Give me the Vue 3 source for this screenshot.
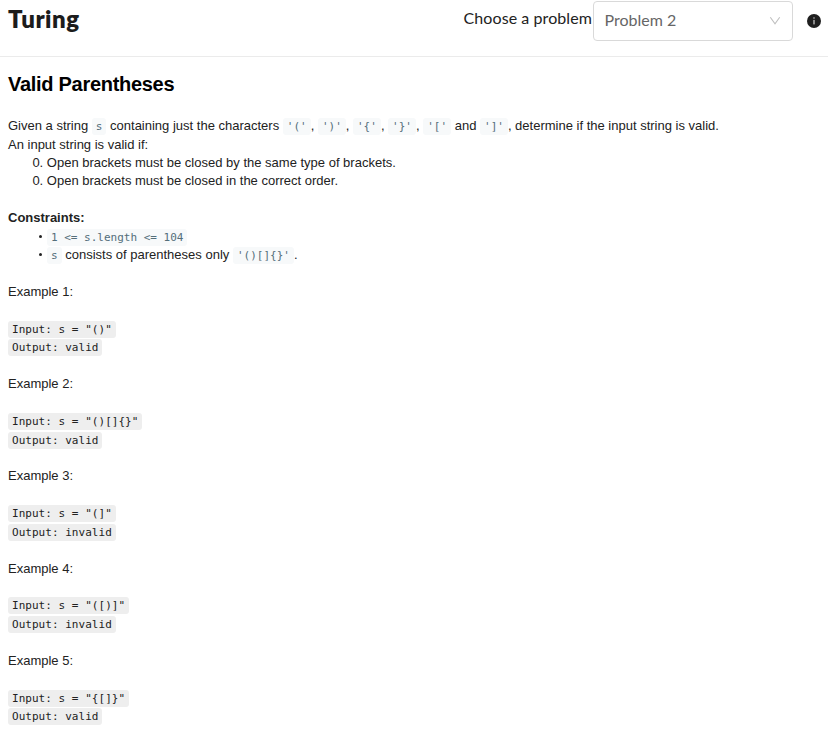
<script setup>
const examples = [
  { input: '"()"', output: 'valid' },
  { input: '"()[]{}"', output: 'valid' },
  { input: '"(]"', output: 'invalid' },
  { input: '"([)]"', output: 'invalid' },
  { input: '"{[]}"', output: 'valid' },
]
</script>

<template>
  <div class="page">
    <header class="bar">
      <div class="brand">Turing</div>
      <div class="picker">
        <label class="label">Choose a problem</label>
        <div class="select">
          <span class="value">Problem 2</span>
          <svg class="chevron" width="12" height="12" viewBox="0 0 12 12" fill="none" stroke="#bfbfbf" stroke-width="1.1">
            <path d="M1.3 2.2 L6 8.9 L10.7 2.2" />
          </svg>
        </div>
        <svg class="info" width="14" height="14" viewBox="0 0 14 14">
          <circle cx="7" cy="7" r="7" fill="#1f1f1f" />
          <rect x="6.4" y="5.9" width="1.2" height="4.5" fill="#d0d0d0" />
          <circle cx="7" cy="4.1" r=".75" fill="#d0d0d0" />
        </svg>
      </div>
    </header>
    <main class="body">
      <h1 class="title">Valid Parentheses</h1>
      <p class="intro">Given a string <code>s</code> containing just the characters <code>'('</code>, <code>')'</code>, <code>'{'</code>, <code>'}'</code>, <code>'['</code> and <code>']'</code>, determine if the input string is valid.</p>
      <p>An input string is valid if:</p>
      <p class="rule">0. Open brackets must be closed by the same type of brackets.</p>
      <p class="rule">0. Open brackets must be closed in the correct order.</p>
      <p class="strong">Constraints:</p>
      <ul class="list">
        <li><code>1 &lt;= s.length &lt;= 104</code></li>
        <li><code>s</code> consists of parentheses only <code>'()[]{}'</code>.</li>
      </ul>
      <section v-for="(e, i) in examples" :key="i" class="example">
        <p class="name">Example {{ i + 1 }}:</p>
        <p><code class="io">Input: s = {{ e.input }}</code></p>
        <p><code class="io">Output: {{ e.output }}</code></p>
      </section>
    </main>
  </div>
</template>

<style>
body { background: #fff; }
</style>

<style scoped>
.page {
  --row: 18.45px;
  width: 828px;
  height: 735px;
  overflow: hidden;
  box-sizing: border-box;
  color: #222;
  font-family: "Liberation Sans", Arial, sans-serif;
  font-size: 13px;
  line-height: var(--row);
}
.bar {
  display: flex;
  justify-content: space-between;
  height: 56px;
  padding: 0 7px 0 8px;
  border-bottom: 1px solid #ebebeb;
  font-family: Lato, sans-serif;
}
.brand {
  font-size: 24px;
  font-weight: 800;
  line-height: 38px;
  letter-spacing: .55px;
  color: #1c1c1c;
}
.picker { display: flex; align-items: flex-start; }
.label {
  font-size: 16px;
  line-height: 36px;
  letter-spacing: .08px;
  white-space: nowrap;
  color: #222;
}
.select {
  display: flex;
  align-items: center;
  justify-content: space-between;
  box-sizing: border-box;
  width: 200px;
  height: 40px;
  margin: 1px 14px 0 1px;
  padding: 0 11px 0 10.5px;
  border: 1px solid #d9d9d9;
  border-radius: 4px;
}
.value { padding-bottom: 2px; font-size: 16px; color: #666; }
.info { margin-top: 14px; }
.body { padding: 15px 8px 0; }
.title {
  margin: 0 0 20.1px;
  font-size: 20px;
  line-height: 25px;
  font-weight: 700;
  letter-spacing: -.29px;
  color: #000;
}
p { margin: 0; height: var(--row); white-space: nowrap; }
.rule { padding-left: 24.4px; }
.strong { margin-top: var(--row); font-weight: 700; }
.list { margin: 0; padding: 0; list-style: none; }
li {
  height: var(--row);
  padding-left: 31px;
  white-space: nowrap;
}
li::before {
  content: "";
  display: inline-block;
  width: 3px;
  height: 3px;
  margin-right: 5px;
  border-radius: 50%;
  background: #222;
  vertical-align: 3px;
}
code {
  padding: 2px 4px;
  border-radius: 3px;
  background: #f7f9fa;
  color: #546e7a;
  font-family: "DejaVu Sans Mono", monospace;
  font-size: 11px;
  line-height: 0;
}
.io { background: #eee; color: #222; letter-spacing: .03px; }
.example { padding-top: var(--row); }
.name { margin-bottom: var(--row); }
</style>
